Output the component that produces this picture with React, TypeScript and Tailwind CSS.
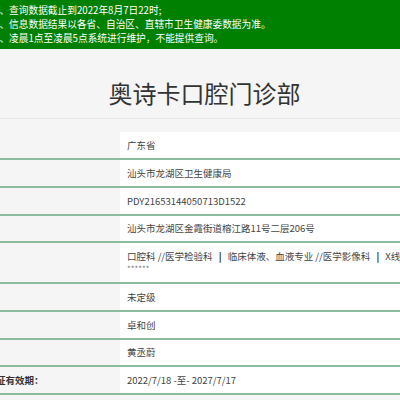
const rows = [
    { label: '所在省份：', value: '广东省' },
    { label: '登记机关：', value: '汕头市龙湖区卫生健康局' },
    { label: '登记号：', value: 'PDY21653144050713D1522' },
    { label: '地址：', value: '汕头市龙湖区金霞街道榕江路11号二层206号', h: 'h-[27px]' },
    { label: '诊疗科目：', value: '', multi: true },
    { label: '医院等级：', value: '未定级' },
    { label: '法定代表人：', value: '卓和创' },
    { label: '主要负责人：', value: '黄丞蔚', h: 'h-[27px]' },
    { label: '医疗机构执业许可证有效期：', value: '2022/7/18 -至- 2027/7/17', bold: true },
];

export default function App() {
    return (
        <div className="w-[400px] h-[400px] overflow-hidden bg-[#f5f5f5] font-['Noto_Sans_CJK_SC','Noto_Sans',sans-serif]">
            {/* notice banner */}
            <div className="h-[49px] bg-[#008000] pt-[3px] text-white text-[9.7px] leading-[14px] whitespace-nowrap">
                <div className="-ml-[6px]">1、查询数据截止到2022年8月7日22时;</div>
                <div className="-ml-[6px]">2、信息数据结果以各省、自治区、直辖市卫生健康委数据为准。</div>
                <div className="-ml-[6px]">3、凌晨1点至凌晨5点系统进行维护，不能提供查询。</div>
            </div>

            <div className="h-[70px] border-b border-[#e6e6e6] pt-[30px] pl-[9px] text-center text-[24px] leading-[28px] text-[#333]">
                奥诗卡口腔门诊部
            </div>

            <div className="mt-[13px] -ml-[100px] w-[600px] text-[9.5px] text-[#444]">
                {rows.map((row, i) => (
                    <div
                        key={i}
                        className={`flex border-b-2 border-[#8dbb9e] ${row.multi ? 'h-[41px]' : row.h ?? 'h-[28px]'}`}
                    >
                        <div className={`w-[220px] shrink-0 pl-[20px] flex items-center whitespace-nowrap ${row.bold ? 'font-bold text-[#333]' : 'text-transparent'}`}>
                            {row.label}
                        </div>
                        <div className="flex-1 bg-white pl-[7px] flex flex-col justify-center whitespace-nowrap">
                            {row.multi ? (
                                <>
                                    <div className="leading-[13px]">
                                        口腔科 //医学检验科 <span className="mx-[4px] font-bold text-[#222]">|</span> 临床体液、血液专业 //医学影像科 <span className="mx-[4px] font-bold text-[#222]">|</span> X线诊断专业
                                    </div>
                                    <div className="leading-[12px] text-[8px] text-[#777]">******</div>
                                </>
                            ) : (
                                <div className="leading-[13px]">{row.value}</div>
                            )}
                        </div>
                    </div>
                ))}
            </div>
        </div>
    );
}
